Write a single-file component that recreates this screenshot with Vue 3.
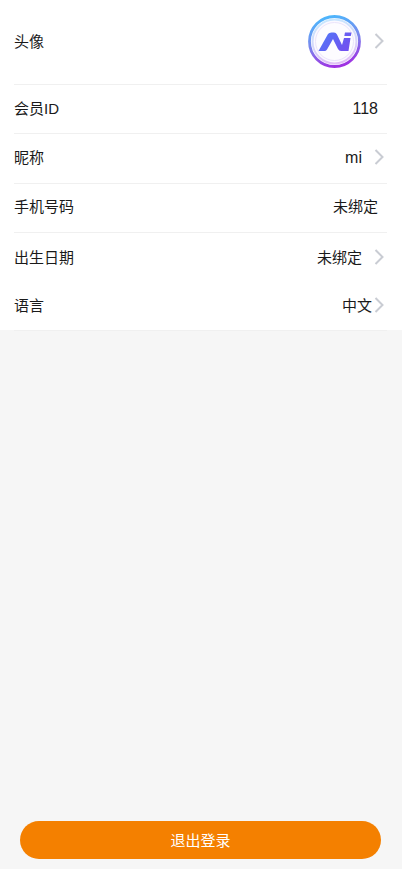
<template>
  <div class="page">
    <div class="list">
      <div v-for="row in rows" :key="row.label" class="row" :class="row.cls">
        <span class="label">{{ row.label }}</span>
        <div class="right">
          <svg v-if="row.avatar" class="avatar" width="54" height="54" viewBox="0 0 54 54">
            <defs>
              <linearGradient id="ring" x1="0.35" y1="0" x2="0.6" y2="1">
                <stop offset="0" stop-color="#4db6fc" />
                <stop offset="0.5" stop-color="#7a86ec" />
                <stop offset="1" stop-color="#a02ee2" />
              </linearGradient>
              <linearGradient id="mark" x1="0" y1="0" x2="1" y2="0.5">
                <stop offset="0" stop-color="#4f7cf8" />
                <stop offset="1" stop-color="#6f52f0" />
              </linearGradient>
              <filter id="soft" x="-5%" y="-5%" width="110%" height="110%">
                <feGaussianBlur stdDeviation="0.5" />
              </filter>
            </defs>
            <g filter="url(#soft)">
              <circle cx="26.500" cy="26.500" r="25" fill="#fff" stroke="url(#ring)" stroke-width="2.800" />
              <circle cx="26.500" cy="26.500" r="22" fill="#fbf9ff" stroke="url(#ring)" stroke-opacity="0.3" stroke-width="2" />
              <circle cx="26.500" cy="26.500" r="19" fill="#fdfcff" stroke="#ebe4fb" stroke-width="1" />
              <path d="M10.500 36 L20 19 Q21 17.500 23.500 17.500 L26 17.500 Q28 17.500 29 19.500 L34 30 L36 23 L42.500 23 L40.500 36 L33 36 Q31 36 30 34 L25 24 L19 34.500 Q18 36 16.500 36 Z" fill="url(#mark)" />
              <path d="M37 17.500 L43.500 17.500 L42.800 21 L36.300 21 Z" fill="#6a5df2" />
            </g>
          </svg>
          <span v-if="row.value" class="value">{{ row.value }}</span>
          <svg v-if="row.arrow" class="arrow" width="10" height="16" viewBox="0 0 10 16">
            <path d="M1.500 1 L8.500 8 L1.500 15" fill="none" stroke="#c9ccd3" stroke-width="2" />
          </svg>
        </div>
      </div>
    </div>
    <div class="footer">
      <button class="logout">退出登录</button>
    </div>
  </div>
</template>

<script setup>
const rows = [
  { label: '头像', avatar: true, arrow: true, cls: 'first' },
  { label: '会员ID', value: '118', cls: 'plain latin' },
  { label: '昵称', value: 'mi', arrow: true, cls: 'latin' },
  { label: '手机号码', value: '未绑定', cls: 'plain' },
  { label: '出生日期', value: '未绑定', arrow: true, cls: 'no-line' },
  { label: '语言', value: '中文', arrow: true, cls: 'lang' }
]
</script>

<style>
html,
body {
  margin: 0;
  background: #f6f6f6;
}
</style>

<style scoped>
.page {
  height: 869px;
  display: flex;
  flex-direction: column;
  background: #f6f6f6;
  font-family: "Liberation Sans", "Noto Sans CJK SC", sans-serif;
  font-size: 15px;
  color: #1a1a1a;
}

.list {
  background: #fff;
  padding: 0 14px;
  height: 330px;
  box-sizing: border-box;
  flex: none;
}

.row {
  height: 49.3px;
  width: 373px;
  box-sizing: border-box;
  display: flex;
  align-items: center;
  justify-content: space-between;
  border-bottom: 1px solid #f0f0f0;
}

.row.first {
  height: 85px;
}

.row.no-line {
  border-bottom: none;
}

.label,
.value {
  line-height: 20px;
}

.plain .label,
.plain .value,
.lang .label,
.lang .value {
  margin-top: -1px;
}

.latin .value {
  font-size: 16px;
}

.right {
  display: flex;
  align-items: center;
  margin-right: 3px;
}

.plain .right {
  margin-right: -1px;
}

.plain .value {
  margin-right: 10px;
}

.avatar {
  margin-top: -1px;
}

.arrow {
  margin-left: 12px;
  margin-top: -2px;
}

.lang .arrow {
  margin-left: 2px;
}

.footer {
  margin-top: auto;
  padding: 0 21px 10px 20px;
}

.logout {
  width: 100%;
  height: 38px;
  border: none;
  border-radius: 19px;
  background: #f48000;
  color: #fff;
  font-family: inherit;
  font-size: 15px;
  display: block;
  padding: 0 0 1px;
}
</style>
